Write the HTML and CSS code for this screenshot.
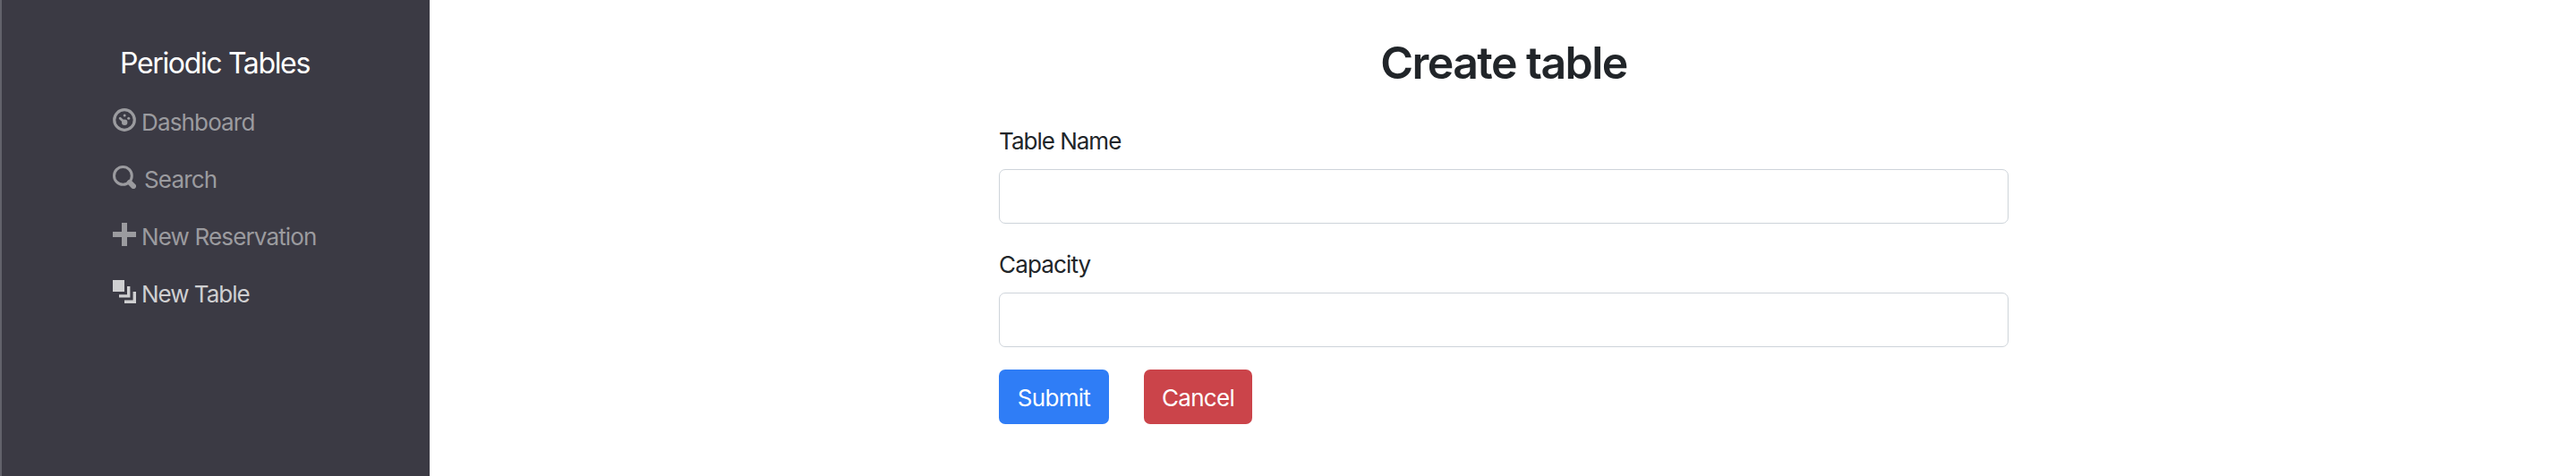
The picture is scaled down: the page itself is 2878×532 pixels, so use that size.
FILE: index.html
```html
<!DOCTYPE html>
<html lang="en">
<head>
<meta charset="utf-8">
<title>Periodic Tables</title>
<link rel="stylesheet" href="styles.css">
</head>
<body>
<div class="layout">
  <nav class="sidebar">
    <a class="brand"><span class="brand-text">Periodic Tables</span></a>
    <ul class="menu">
      <li class="item">
        <svg class="icon" viewBox="0 0 26 26"><circle cx="13" cy="13" r="11.3" fill="none" stroke="currentColor" stroke-width="3.2"/><path d="M8.2 11.2l4.6 4.4" stroke="currentColor" stroke-width="2.8" stroke-linecap="round"/><circle cx="13.2" cy="15.8" r="3.2" fill="currentColor"/><circle cx="13.2" cy="7.9" r="1.5" fill="currentColor"/><circle cx="17.7" cy="11.3" r="1.5" fill="currentColor"/></svg>
        <span class="text dashboard">Dashboard</span>
      </li>
      <li class="item">
        <svg class="icon" viewBox="0 0 26 26"><circle cx="11.4" cy="11.4" r="9.9" fill="none" stroke="currentColor" stroke-width="3"/><path d="M18.8 18.8l4.3 4.3" stroke="currentColor" stroke-width="5.8" stroke-linecap="round"/></svg>
        <span class="text search">Search</span>
      </li>
      <li class="item">
        <svg class="icon" viewBox="0 0 26 26"><path d="M10 0h6v10h10v6H16v10h-6V16H0v-6h10z" fill="currentColor"/></svg>
        <span class="text reservation">New Reservation</span>
      </li>
      <li class="item active">
        <svg class="icon" viewBox="0 0 26 26"><path d="M0 0h13v13H0zM16 7h3.4v12.6H7v-3.4h9zM22.6 13H26v13H13v-3.4h9.6z" fill="currentColor"/></svg>
        <span class="text table">New Table</span>
      </li>
    </ul>
  </nav>
  <main class="content">
    <h1 class="title">Create table</h1>
    <form class="form">
      <label class="label name" for="name">Table Name</label>
      <input class="input" id="name" type="text">
      <label class="label capacity" for="capacity">Capacity</label>
      <input class="input" id="capacity" type="text">
      <div class="actions">
        <button class="button submit" type="button">Submit</button>
        <button class="button cancel" type="button">Cancel</button>
      </div>
    </form>
  </main>
</div>
</body>
</html>
```
FILE: styles.css
```css
* { box-sizing: border-box; }
body {
  margin: 0;
  background: #fff;
  color: #212529;
  font-family: Inter, "Liberation Sans", sans-serif;
  font-size: 26px;
}
.layout { display: flex; height: 532px; overflow: hidden; }
.sidebar {
  width: 480px;
  flex: none;
  padding: 48px 0 0 124px;
  background: #3b3a44;
  border-left: 2px solid #62626b;
}
.brand {
  display: block;
  padding-left: 8px;
  height: 46px;
  line-height: 46px;
  font-size: 32px;
  letter-spacing: -1.35px;
  color: #fff;
  white-space: nowrap;
}
.menu { list-style: none; margin: 11px 0 0; padding: 0; }
.item {
  display: flex;
  height: 64px;
  padding-top: 16px;
  color: #9b9b9f;
  white-space: nowrap;
}
.item.active { color: #cfcfd1; }
.icon { width: 26px; height: 26px; flex: none; }
.text { margin-left: 6px; line-height: 32px; letter-spacing: -0.85px; }
.text.search { margin-left: 9px; }
.text.table { letter-spacing: -1px; }
.content { flex: 1; padding: 40px 634px 0 636px; }
.title {
  margin: 0;
  height: 60px;
  line-height: 60px;
  text-align: center;
  font-size: 50px;
  font-weight: 600;
  letter-spacing: -1.55px;
}
.form { display: flex; flex-direction: column; padding-top: 38px; }
.label { height: 40px; line-height: 40px; margin-bottom: 11px; letter-spacing: -0.85px; }
.label.name { letter-spacing: -1px; }
.input {
  height: 61px;
  width: 1128px;
  margin: 0 0 26px;
  border: 1px solid #ced4da;
  border-radius: 7px;
  background: #fff;
}
.actions { display: flex; gap: 39px; margin-top: -1px; }
.button {
  height: 61px;
  padding: 1px 0 0;
  border: 0;
  border-radius: 7px;
  color: #fff;
  font: inherit;
  letter-spacing: -0.7px;
}
.submit { width: 123px; background: #2f7df6; }
.cancel { width: 121px; background: #cb444a; }
```
